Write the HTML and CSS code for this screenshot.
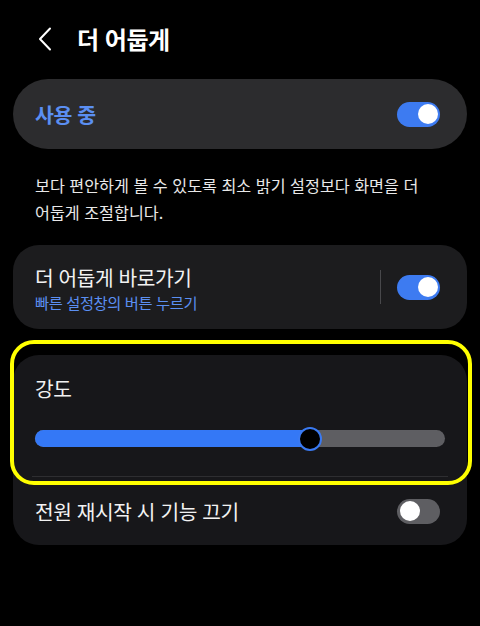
FILE: index.html
```html
<!DOCTYPE html>
<html lang="ko">
<head>
<meta charset="utf-8">
<link rel="stylesheet" href="styles.css">
</head>
<body>
<div class="screen">
  <header class="header">
    <svg class="back" width="14" height="24" viewBox="0 0 14 24"><path d="M12 1.5 L2 12 L12 22.5" fill="none" stroke="#ffffff" stroke-width="2" stroke-linecap="round" stroke-linejoin="round"/></svg>
    <h1 class="title">더 어둡게</h1>
  </header>

  <div class="card card-main">
    <span class="main-label">사용 중</span>
    <span class="toggle on"><span class="knob"></span></span>
  </div>

  <p class="desc">보다 편안하게 볼 수 있도록 최소 밝기 설정보다 화면을 더 어둡게 조절합니다.</p>

  <div class="card card-short">
    <div class="short-text">
      <div class="row-title">더 어둡게 바로가기</div>
      <div class="row-sub">빠른 설정창의 버튼 누르기</div>
    </div>
    <span class="vdiv"></span>
    <span class="toggle on"><span class="knob"></span></span>
  </div>

  <div class="card card-group">
    <div class="intensity">
      <div class="row-title">강도</div>
      <div class="slider">
        <div class="fill" style="width: 67%"></div>
        <div class="thumb" style="left: 67%"></div>
      </div>
    </div>
    <div class="hdiv"></div>
    <div class="power-row">
      <span class="row-title">전원 재시작 시 기능 끄기</span>
      <span class="toggle off"><span class="knob"></span></span>
    </div>
    <div class="highlight"></div>
  </div>
</div>
</body>
</html>
```

FILE: styles.css
```css
* { box-sizing: border-box; }
html, body {
  margin: 0;
  padding: 0;
  background: #000000;
}
body {
  font-family: "Noto Sans CJK KR", "Noto Sans", sans-serif;
  color: #ffffff;
  width: 480px;
  height: 626px;
  overflow: hidden;
  word-break: keep-all;
}
.screen {
  display: flex;
  flex-direction: column;
  padding: 0 13px;
}
.header {
  display: flex;
  align-items: center;
  height: 79px;
  padding-left: 25px;
  padding-bottom: 2px;
}
.back {
  display: block;
  margin-right: 25px;
}
.title {
  margin: 0;
  font-size: 24px;
  font-weight: 700;
  letter-spacing: -0.5px;
  line-height: 1;
}
.card {
  background: #1c1c1e;
  border-radius: 26px;
}
.card-main {
  background: #2c2c2e;
  height: 70px;
  border-radius: 35px;
  display: flex;
  align-items: center;
  justify-content: space-between;
  padding: 0 27px 0 22px;
}
.main-label {
  color: #5b8ff2;
  font-size: 20.5px;
  font-weight: 700;
  letter-spacing: -0.4px;
}
.toggle {
  position: relative;
  display: block;
  width: 43px;
  height: 25px;
  border-radius: 13px;
  flex: none;
}
.toggle.on { background: #3d7bf1; }
.toggle.off { background: #5e5e62; }
.knob {
  position: absolute;
  top: 2.5px;
  width: 20px;
  height: 20px;
  border-radius: 50%;
  background: #ffffff;
}
.toggle.on .knob { right: 2.5px; }
.toggle.off .knob { left: 2.5px; }
.desc {
  margin: 23px 0 19px;
  padding: 0 26px 0 22px;
  font-size: 16.2px;
  line-height: 27px;
  color: #e8e8e8;
  letter-spacing: 0;
  height: 54px;
  word-break: keep-all;
}
.card-short {
  height: 84px;
  display: flex;
  align-items: center;
  padding: 0 27px 0 22px;
}
.short-text {
  flex: 1;
  display: flex;
  flex-direction: column;
  gap: 1px;
}
.row-title {
  font-size: 20.3px;
  color: #f2f2f2;
  letter-spacing: -0.4px;
  line-height: 28px;
}
.row-sub {
  font-size: 15.3px;
  color: #5b8ff2;
  letter-spacing: -0.4px;
  line-height: 20px;
}
.vdiv {
  width: 1px;
  height: 34px;
  background: #48484b;
  margin-right: 16px;
}
.card-group {
  position: relative;
  margin-top: 26px;
  background: #17171a;
  padding: 0;
}
.intensity {
  padding: 19px 22px 0 22px;
  height: 121px;
}
.slider {
  position: relative;
  margin-top: 28px;
  height: 17px;
  border-radius: 9px;
  background: #5e5e62;
}
.fill {
  position: absolute;
  left: 0;
  top: 0;
  bottom: 0;
  background: #3478f6;
  border-radius: 9px 0 0 9px;
}
.thumb {
  position: absolute;
  top: 50%;
  width: 24px;
  height: 24px;
  margin-left: -12px;
  margin-top: -12px;
  border-radius: 50%;
  background: #000000;
  border: 2px solid #3a7af2;
}
.hdiv {
  height: 1px;
  margin: 0 19px;
  background: #2e2e31;
}
.power-row {
  height: 68px;
  display: flex;
  align-items: center;
  justify-content: space-between;
  padding: 0 27px 0 22px;
}
.highlight {
  position: absolute;
  left: -3px;
  right: -5px;
  top: -15px;
  height: 145px;
  border: 4px solid #ffff00;
  border-radius: 24px;
  pointer-events: none;
}
```
